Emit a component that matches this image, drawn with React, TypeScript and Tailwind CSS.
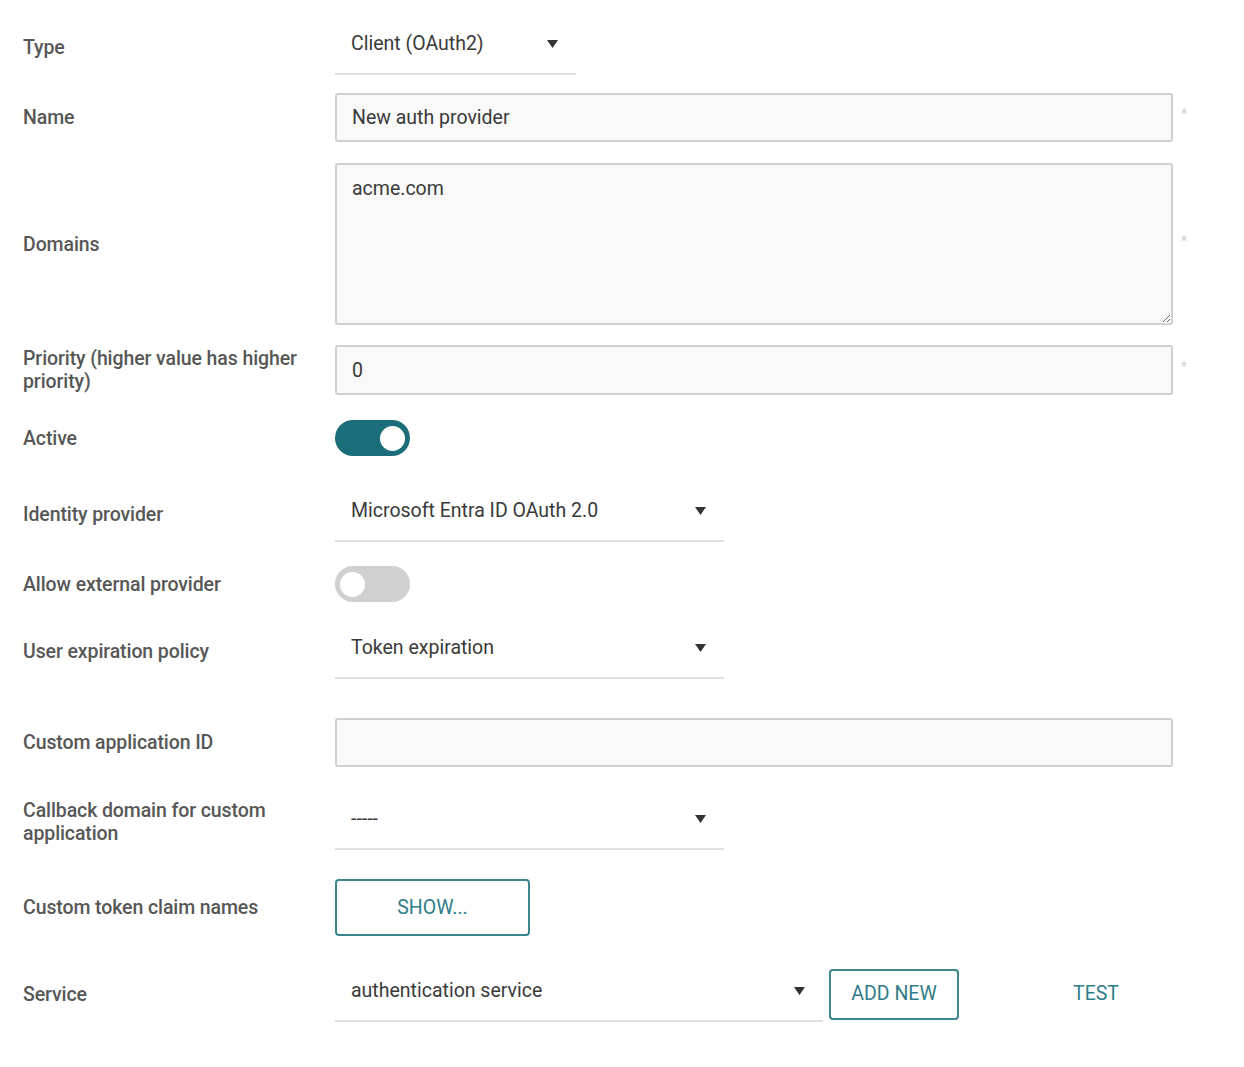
import React from "react";

const font = { fontFamily: "Roboto, 'Noto Sans', sans-serif" };

function Label({ children }: { children: React.ReactNode }) {
  return (
    <div className="w-[312px] shrink-0 pr-[12px] text-[19.5px] leading-[23px] font-medium tracking-[-0.1px] text-[#575757]">
      {children}
    </div>
  );
}

function Arrow() {
  return (
    <svg width="11" height="8" viewBox="0 0 11 8" className="shrink-0">
      <polygon points="0,0 11,0 5.5,8" fill="#333333" />
    </svg>
  );
}

function Select({ value, width }: { value: string; width: string }) {
  return (
    <div
      className={`${width} h-[56px] flex items-center justify-between pl-[16px] pr-[18px] pb-[4px] border-b-2 border-[#e0e0e0] text-[19.5px] text-[#3a3a3a]`}
    >
      <span>{value}</span>
      <Arrow />
    </div>
  );
}

function Star() {
  return <span className="ml-[8px] -mt-[6px] text-[14px] text-[#d0d0d0]">*</span>;
}

function Toggle({ on }: { on: boolean }) {
  return (
    <div
      className={`w-[75px] h-[36px] rounded-full flex items-center px-[5px] ${
        on ? "bg-[#1b6d79] justify-end" : "bg-[#d0d0d0] justify-start"
      }`}
    >
      <div className="w-[25px] h-[25px] rounded-full bg-white" />
    </div>
  );
}

const inputCls =
  "w-[838px] rounded-[3px] border-2 border-[#d0d0d0] bg-[#f9f9f9] px-[15px] text-[19.5px] text-[#3a3a3a] outline-none";

export default function App() {
  return (
    <div className="bg-white min-h-[1067px] w-[1244px] pl-[23px]" style={font}>
      {/* Type */}
      <div className="flex items-center pt-[19px]">
        <Label>Type</Label>
        <Select value="Client (OAuth2)" width="w-[241px]" />
      </div>

      {/* Name */}
      <div className="flex items-center mt-[18px]">
        <Label>Name</Label>
        <input defaultValue="New auth provider" className={`${inputCls} h-[49px]`} style={font} />
        <Star />
      </div>

      {/* Domains */}
      <div className="flex items-center mt-[21px]">
        <Label>Domains</Label>
        <textarea
          defaultValue="acme.com"
          className={`${inputCls} h-[162px] pt-[11px] leading-[26px]`}
          style={font}
        />
        <Star />
      </div>

      {/* Priority */}
      <div className="flex items-center mt-[20px]">
        <Label>Priority (higher value has higher priority)</Label>
        <input defaultValue="0" className={`${inputCls} h-[50px]`} style={font} />
        <Star />
      </div>

      {/* Active */}
      <div className="flex items-center mt-[25px]">
        <Label>Active</Label>
        <Toggle on />
      </div>

      {/* Identity provider */}
      <div className="flex items-center mt-[30px]">
        <Label>Identity provider</Label>
        <Select value="Microsoft Entra ID OAuth 2.0" width="w-[389px]" />
      </div>

      {/* Allow external provider */}
      <div className="flex items-center mt-[24px]">
        <Label>Allow external provider</Label>
        <Toggle on={false} />
      </div>

      {/* User expiration policy */}
      <div className="flex items-center mt-[21px]">
        <Label>User expiration policy</Label>
        <Select value="Token expiration" width="w-[389px]" />
      </div>

      {/* Custom application ID */}
      <div className="flex items-center mt-[39px]">
        <Label>Custom application ID</Label>
        <input defaultValue="" className={`${inputCls} h-[49px]`} style={font} />
      </div>

      {/* Callback domain */}
      <div className="flex items-center mt-[27px]">
        <Label>Callback domain for custom application</Label>
        <Select value="-----" width="w-[389px]" />
      </div>

      {/* Custom token claim names */}
      <div className="flex items-center mt-[29px]">
        <Label>Custom token claim names</Label>
        <button
          className="w-[195px] h-[57px] rounded-[4px] border-2 border-[#3a8590] text-[19.5px] text-[#2f7d88] uppercase"
          style={font}
        >
          SHOW...
        </button>
      </div>

      {/* Service */}
      <div className="flex items-center mt-[30px]">
        <Label>Service</Label>
        <Select value="authentication service" width="w-[488px]" />
        <button
          className="ml-[6px] w-[130px] h-[51px] rounded-[4px] border-2 border-[#3a8590] text-[19.5px] text-[#2f7d88]"
          style={font}
        >
          ADD NEW
        </button>
        <button className="ml-[72px] w-[130px] h-[51px] text-[19.5px] text-[#2f7d88]" style={font}>
          TEST
        </button>
      </div>
    </div>
  );
}
